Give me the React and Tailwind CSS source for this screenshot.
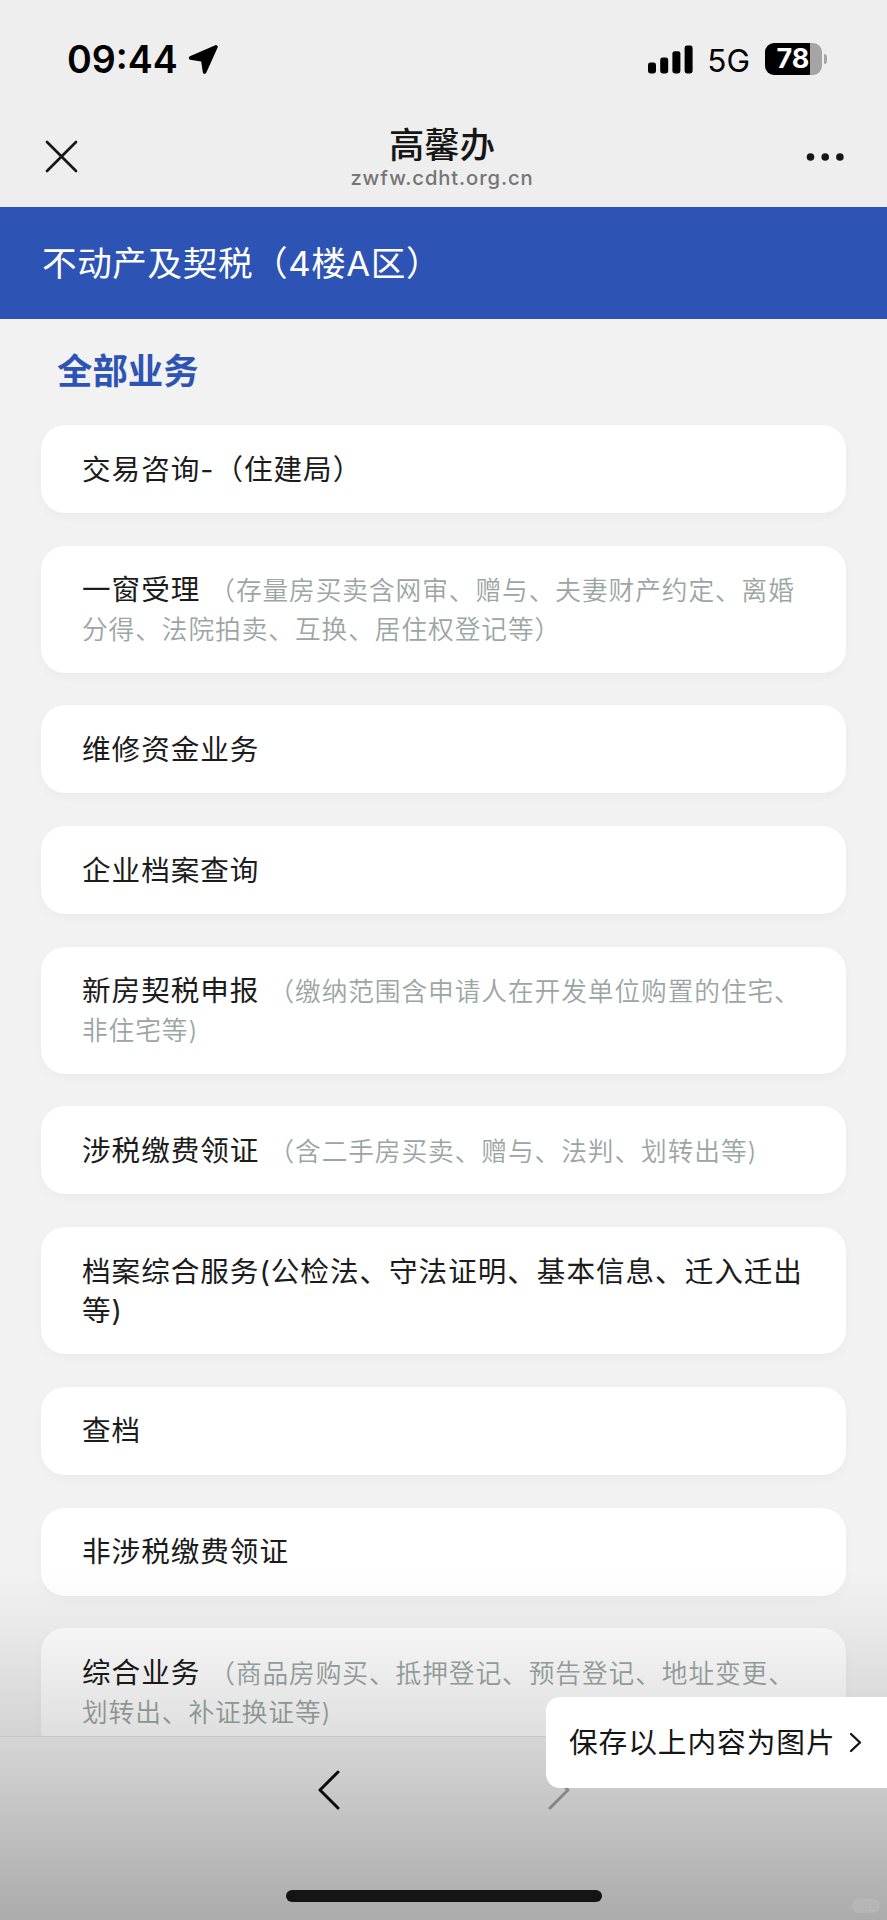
const SERVICES = [
  { name: '交易咨询-（住建局）' },
  { name: '一窗受理', note: '（存量房买卖含网审、赠与、夫妻财产约定、离婚分得、法院拍卖、互换、居住权登记等）' },
  { name: '维修资金业务' },
  { name: '企业档案查询' },
  { name: '新房契税申报', note: '（缴纳范围含申请人在开发单位购置的住宅、非住宅等)' },
  { name: '涉税缴费领证', note: '（含二手房买卖、赠与、法判、划转出等)' },
  { name: '档案综合服务(公检法、守法证明、基本信息、迁入迁出等)' },
  { name: '查档' },
  { name: '非涉税缴费领证' },
  { name: '综合业务', note: '（商品房购买、抵押登记、预告登记、地址变更、划转出、补证换证等)' },
]

function StatusBar() {
  return (
    <div className="flex h-[118px] items-center justify-between pl-[67px] pr-[60px] text-black">
      <div className="flex items-center gap-[10px]">
        <span className="mt-[2px] text-[37.6px] leading-[38px] font-semibold">09:44</span>
        <svg width="31" height="31" viewBox="0 0 31 31">
          <path d="M28 2.8 L2.6 14 L14.8 15.9 L16.6 28 Z" fill="#000" stroke="#000" strokeWidth="3.6" strokeLinejoin="round" />
        </svg>
      </div>
      <div className="flex items-center">
        <svg width="45" height="29" viewBox="0 0 45 29">
          <rect x="0" y="17.5" width="8" height="11" rx="2.4" />
          <rect x="12.2" y="12.5" width="8" height="16" rx="2.4" />
          <rect x="24.4" y="6.2" width="8" height="22.3" rx="2.4" />
          <rect x="36.6" y="0.5" width="8" height="28" rx="2.4" />
        </svg>
        <span className="ml-[14px] mt-[3px] text-[31.6px] leading-[38px]">5G</span>
        <div className="ml-[15px] flex items-center gap-[2px]">
          <div className="flex h-[32px] w-[57px] items-center justify-center rounded-[9px] bg-linear-to-r from-black from-79% to-[#a5a5a5] to-79% pr-[1px]">
            <span className="text-[27px] leading-[32px] font-bold text-white">78</span>
          </div>
          <div className="h-[10px] w-[3px] rounded-r-full bg-[#a5a5a5]" />
        </div>
      </div>
    </div>
  )
}

function NavBar() {
  return (
    <div className="flex h-[89px] items-start justify-between pl-[45px] pr-[42px]">
      <svg className="mt-[22px]" width="33" height="33" viewBox="0 0 33 33" fill="none" stroke="#161616" strokeWidth="2.7" strokeLinecap="round">
        <path d="M2 2 L31 31 M31 2 L2 31" />
      </svg>
      <div className="flex flex-col items-center">
        <h1 className="mt-[8px] text-[35.3px] leading-[40px] font-medium text-[#161616]">高馨办</h1>
        <p className="-mt-px text-[20.2px] leading-[26px] font-medium tracking-[0.9px] text-[#757575]">zwfw.cdht.org.cn</p>
      </div>
      <svg className="mt-[34px]" width="39" height="10" viewBox="0 0 39 10" fill="#161616">
        <circle cx="4.5" cy="5" r="3.8" />
        <circle cx="19.2" cy="5" r="3.8" />
        <circle cx="33.9" cy="5" r="3.8" />
      </svg>
    </div>
  )
}

function ServiceCard({ name, note }) {
  return (
    <li className="rounded-[24px] bg-white px-[41px] py-[24.5px] text-[28.6px] leading-[39px] tracking-[0.97px] text-[#1c1c1c] shadow-[0_4px_12px_rgba(0,0,0,0.03)]">
      {name}
      {note && <span className="ml-[9px] text-[25.7px] leading-[0] font-[350] tracking-[0.93px] text-[#9ba6a4]">{note}</span>}
    </li>
  )
}

function BottomBar() {
  return (
    <div className="flex h-[184px] shrink-0 flex-col items-center border-t border-[#e4e4e4] bg-[#f5f5f5]">
      <div className="mt-[33px] flex gap-[208px]">
        <svg width="22" height="40" viewBox="0 0 22 40" fill="none" stroke="#0d0d0d" strokeWidth="3" strokeLinecap="round" strokeLinejoin="round">
          <path d="M20 2 L2 20 L20 38" />
        </svg>
        <svg width="22" height="40" viewBox="0 0 22 40" fill="none" stroke="#a5a5a5" strokeWidth="3" strokeLinecap="round" strokeLinejoin="round">
          <path d="M2 2 L20 20 L2 38" />
        </svg>
      </div>
    </div>
  )
}

export default function App() {
  return (
    <div className="relative flex h-[1920px] w-[887px] flex-col overflow-hidden bg-[#f2f2f2] font-['Inter','Noto_Sans_CJK_SC',sans-serif]">
      <header className="shrink-0 bg-[#eeeeee]">
        <StatusBar />
        <NavBar />
      </header>

      <div className="flex h-[111.5px] shrink-0 items-center bg-[#2d54b5] pt-[3px] pl-[42px] text-[34.6px] tracking-[0.6px] text-white">
        不动产及契税（4楼A区）
      </div>

      <main className="min-h-0 flex-1 overflow-hidden px-[41px]">
        <h2 className="mt-[27.5px] pl-[16px] text-[35.4px] leading-[52px] font-bold text-[#2d54b5]">全部业务</h2>
        <ul className="mt-[27px] flex flex-col gap-[32.7px]">
          {SERVICES.map(s => <ServiceCard key={s.name} {...s} />)}
        </ul>
      </main>

      <BottomBar />

      {/* dark fade over the bottom of the screen */}
      <div className="pointer-events-none absolute inset-x-0 bottom-0 h-[350px] bg-[linear-gradient(to_bottom,rgba(0,0,0,0)_0%,rgba(0,0,0,0.04)_17%,rgba(0,0,0,0.13)_48%,rgba(0,0,0,0.3)_100%)]" />

      <div className="absolute bottom-[18px] left-[286px] h-[12px] w-[316px] rounded-full bg-[#141414]" />

      {/* save as image */}
      <button className="absolute right-0 bottom-[132px] flex h-[91px] w-[341px] items-center rounded-l-[14px] bg-white pl-[23px] text-[28.7px] tracking-[0.93px] text-[#161616]">
        保存以上内容为图片
        <svg className="ml-[13px]" width="13" height="21" viewBox="0 0 13 21" fill="none" stroke="#161616" strokeWidth="2.4" strokeLinecap="round" strokeLinejoin="round">
          <path d="M2 2 L11 10.5 L2 19" />
        </svg>
      </button>

      <div className="absolute right-[7px] bottom-[7px] flex h-[14px] w-[28px] items-center justify-center rounded-full bg-white/10 text-[7px] text-black/8">
        小红书
      </div>
    </div>
  )
}
